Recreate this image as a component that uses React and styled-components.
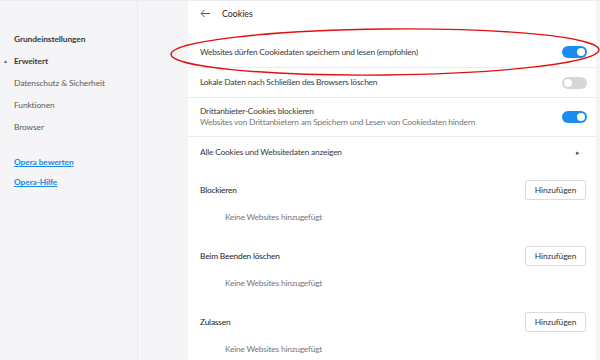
import React from 'react';
import styled, { createGlobalStyle } from 'styled-components';

const GlobalStyle = createGlobalStyle`
  html, body {
    margin: 0;
    padding: 0;
    background: #f5f5f7;
    font-family: Lato, "Open Sans", sans-serif;
    color: #333;
  }
  * { box-sizing: border-box; }
`;

const Toggle = ({ on }) => (
  <Switch on={on}>
    <Knob on={on} />
  </Switch>
);

const Site = ({ title }) => (
  <Block>
    <BlockHead>
      <BlockTitle>{title}</BlockTitle>
      <AddButton>Hinzufügen</AddButton>
    </BlockHead>
    <Empty>Keine Websites hinzugefügt</Empty>
  </Block>
);

export default () => (
  <Page>
    <GlobalStyle />
    <Sidebar>
      <NavItem strong>Grundeinstellungen</NavItem>
      <NavItem strong>
        <Caret>▲</Caret>Erweitert
      </NavItem>
      <NavItem>Datenschutz &amp; Sicherheit</NavItem>
      <NavItem>Funktionen</NavItem>
      <NavItem>Browser</NavItem>
      <Links>
        <NavLink>Opera bewerten</NavLink>
        <NavLink>Opera-Hilfe</NavLink>
      </Links>
    </Sidebar>
    <Main>
      <Card>
        <Header>
          <Back viewBox="0 0 12 10">
            <path d="M11 5H1.5M5 1L1 5l4 4" fill="none" stroke="#555" strokeWidth="1.1" />
          </Back>
          <HeaderTitle>Cookies</HeaderTitle>
        </Header>
        <Row h={30} first>
          <RowText>Websites dürfen Cookiedaten speichern und lesen (empfohlen)</RowText>
          <Toggle on />
        </Row>
        <Row h={30}>
          <RowText>Lokale Daten nach Schließen des Browsers löschen</RowText>
          <Toggle />
        </Row>
        <Row h={39}>
          <div>
            <RowText>Drittanbieter-Cookies blockieren</RowText>
            <SubText>Websites von Drittanbietern am Speichern und Lesen von Cookiedaten hindern</SubText>
          </div>
          <Toggle on />
        </Row>
        <Row h={32}>
          <RowText>Alle Cookies und Websitedaten anzeigen</RowText>
          <Arrow>▸</Arrow>
        </Row>
        <Site title="Blockieren" />
        <Site title="Beim Beenden löschen" />
        <Site title="Zulassen" />
      </Card>
      <Ellipse viewBox="0 0 440 50">
        <ellipse cx="215" cy="25" rx="214" ry="23" fill="none" stroke="#e01010" strokeWidth="1.4" transform="rotate(-0.6 215 25)" />
      </Ellipse>
    </Main>
  </Page>
);

const Page = styled.div`
  display: flex;
  width: 600px;
  height: 360px;
  overflow: hidden;
  border-top: 1px solid #ececee;
`;

const Sidebar = styled.nav`
  width: 138px;
  flex: none;
  border-right: 1px solid #e9e9ec;
  padding-top: 27px;
`;

const NavItem = styled.div`
  position: relative;
  height: 22px;
  line-height: 22px;
  padding-left: 14px;
  font-size: 8.4px;
  letter-spacing: -0.1px;
  font-weight: ${p => (p.strong ? 700 : 400)};
  color: ${p => (p.strong ? '#3a3a3a' : '#5a5a5a')};
`;

const Caret = styled.span`
  position: absolute;
  left: 3px;
  font-size: 5px;
  color: #666;
`;

const Links = styled.div`
  margin-top: 14px;
`;

const NavLink = styled.a`
  display: block;
  height: 20px;
  line-height: 20px;
  padding-left: 14px;
  font-size: 8.4px;
  letter-spacing: -0.1px;
  font-weight: 700;
  color: #1a8ae6;
  text-decoration: underline;
`;

const Main = styled.main`
  position: relative;
  flex: 1;
  padding-left: 50px;
`;

const Card = styled.section`
  width: 408px;
  height: 100%;
  background: #fff;
  font-size: 8.4px;
  letter-spacing: -0.2px;
`;

const Header = styled.div`
  display: flex;
  align-items: center;
  height: 24px;
  padding-left: 12px;
  margin-bottom: 12px;
`;

const Back = styled.svg`
  width: 11px;
  height: 9px;
  margin-right: 11px;
`;

const HeaderTitle = styled.span`
  font-size: 8.8px;
  color: #1e1e1e;
  letter-spacing: 0;
`;

const Row = styled.div`
  display: flex;
  align-items: center;
  justify-content: space-between;
  height: ${p => p.h}px;
  padding: 0 9px 0 12px;
  border-top: ${p => (p.first ? 'none' : '1px solid #ececee')};
`;

const RowText = styled.div`
  color: #3a3a3a;
  line-height: 11px;
`;

const SubText = styled.div`
  color: #777;
  line-height: 11px;
`;

const Switch = styled.div`
  position: relative;
  width: 25px;
  height: 12px;
  border-radius: 6px;
  background: ${p => (p.on ? '#1a8cf0' : '#d7d7db')};
`;

const Knob = styled.div`
  position: absolute;
  top: 2px;
  left: ${p => (p.on ? '15px' : '2px')};
  width: 8px;
  height: 8px;
  border-radius: 50%;
  background: #fff;
`;

const Arrow = styled.span`
  font-size: 7px;
  color: #555;
  margin-right: 7px;
`;

const Block = styled.div`
  padding: 0 10px 0 12px;
`;

const BlockHead = styled.div`
  display: flex;
  align-items: center;
  justify-content: space-between;
  height: 20px;
  margin-top: 12px;
`;

const BlockTitle = styled.div`
  color: #1e1e1e;
`;

const AddButton = styled.button`
  width: 61px;
  height: 20px;
  border: 1px solid #dcdce0;
  border-radius: 2px;
  background: #fff;
  font-family: inherit;
  font-size: 8.4px;
  letter-spacing: -0.1px;
  color: #333;
  padding: 0;
`;

const Empty = styled.div`
  height: 34px;
  line-height: 34px;
  padding-left: 25px;
  color: #777;
`;

const Ellipse = styled.svg`
  position: absolute;
  left: 32px;
  top: 26px;
  width: 440px;
  height: 50px;
  pointer-events: none;
`;
